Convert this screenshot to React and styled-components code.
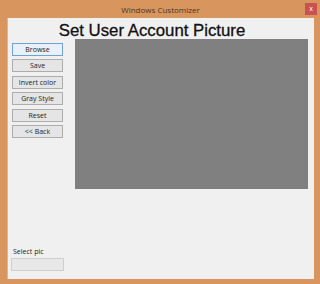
import React from 'react';
import styled, { createGlobalStyle } from 'styled-components';

const Global = createGlobalStyle`
  html, body { margin: 0; padding: 0; background: #d6965f; }
  body { width: 320px; height: 284px; overflow: hidden; }
`;

const Window = styled.div`
  width: 320px;
  height: 284px;
  box-sizing: border-box;
  background: #d8955e;
  display: flex;
  flex-direction: column;
  padding: 0 6px 5px 7px;
  font-family: "Segoe UI", "Open Sans", "Liberation Sans", sans-serif;
`;

const TitleBar = styled.div`
  height: 18px;
  flex: none;
  position: relative;
  display: flex;
  align-items: center;
  justify-content: center;
  font-size: 8px;
  color: #4a3526;
`;

const CloseBox = styled.div`
  position: absolute;
  right: -3px;
  top: 3px;
  width: 12px;
  height: 12px;
  background: #c9514f;
  color: #fff;
  font-size: 7px;
  line-height: 11px;
  text-align: center;
`;

const Client = styled.div`
  flex: 1;
  background: #f0f0f0;
  border-left: 1px solid #e9b48a;
  display: flex;
  flex-direction: column;
  position: relative;
`;

const Heading = styled.div`
  font-family: "Liberation Sans", Arial, sans-serif;
  font-size: 16.8px;
  color: #111;
  text-align: center;
  padding-right: 18px;
  height: 21px;
  line-height: 25px;
  -webkit-text-stroke: 0.3px #111;
`;

const Body = styled.div`
  display: flex;
  flex: 1;
`;

const Side = styled.div`
  width: 67px;
  padding: 3.5px 0 0 4px;
  box-sizing: border-box;
  display: flex;
  flex-direction: column;
`;

const Buttons = styled.div`
  display: flex;
  flex-direction: column;
  gap: 3.6px;
`;

const Button = styled.div`
  width: 51px;
  height: 13px;
  box-sizing: border-box;
  border: 1px solid ${p => (p.focused ? '#6fa3d6' : '#adadad')};
  background: ${p => (p.focused ? '#e9f0f7' : '#e5e5e5')};
  font-size: 7px;
  line-height: 11px;
  text-align: center;
  color: #222;
  white-space: nowrap;
`;

const Label = styled.div`
  margin-top: auto;
  font-size: 7px;
  color: #222;
  padding-left: 1px;
`;

const Field = styled.div`
  margin: 2px 0 8px -1px;
  width: 53px;
  height: 13px;
  box-sizing: border-box;
  border: 1px solid #cfcfcf;
  background: #e8e8e8;
`;

const Picture = styled.div`
  width: 233px;
  height: 150px;
  background: #808080;
`;

const buttons = ['Browse', 'Save', 'Invert color', 'Gray Style', 'Reset', '<< Back'];

export default function App() {
  return (
    <>
      <Global />
      <Window>
        <TitleBar>
          Windows Customizer
          <CloseBox>x</CloseBox>
        </TitleBar>
        <Client>
          <Heading>Set User Account Picture</Heading>
          <Body>
            <Side>
              <Buttons>
                {buttons.map((b, i) => (
                  <Button key={b} focused={i === 0}>{b}</Button>
                ))}
              </Buttons>
              <Label>Select pic</Label>
              <Field />
            </Side>
            <Picture />
          </Body>
        </Client>
      </Window>
    </>
  );
}
